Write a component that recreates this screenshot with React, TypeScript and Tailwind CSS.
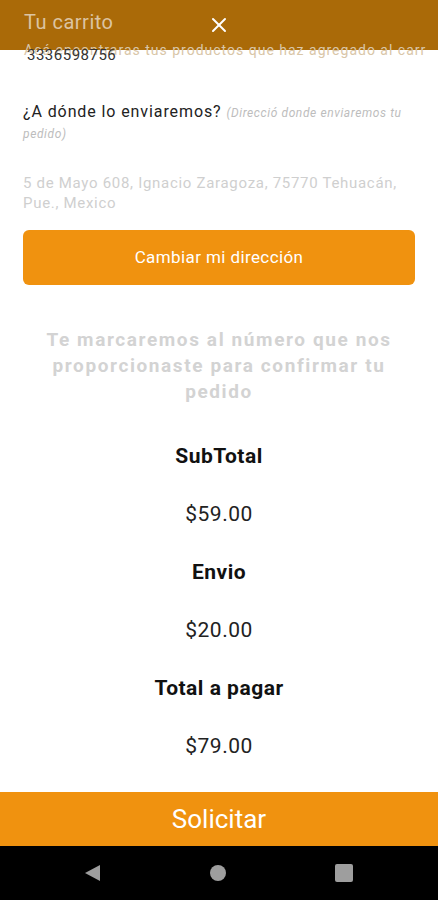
import { X } from 'lucide-react';

const font = { fontFamily: 'Roboto, "Noto Sans", sans-serif' };

const totals = [
  { label: 'SubTotal', value: '$59.00' },
  { label: 'Envio', value: '$20.00' },
  { label: 'Total a pagar', value: '$79.00' },
];

export default function App() {
  return (
    <div className="w-[438px] h-[900px] bg-white flex flex-col overflow-hidden" style={font}>
      {/* Cabecera: el subtítulo se sale de la barra y queda bajo el teléfono */}
      <div className="relative h-[50px] bg-[#aa6a08] shrink-0 z-0">
        <div className="flex items-start pl-6 pt-[9px]">
          <span className="text-[20px] leading-[26px] tracking-[0.5px] text-[#dcc4a2] w-[183px]">Tu carrito</span>
          <X className="mt-[4px] w-6 h-6 text-white" strokeWidth={2} />
        </div>
        <p className="relative z-10 pl-6 mt-[5px] text-[14px] leading-[16px] tracking-[1px] text-[#d9c6a8] whitespace-nowrap overflow-hidden">
          Acá encontraras tus productos que haz agregado al carr
        </p>
      </div>

      <div className="relative z-10 flex-1 min-h-0 flex flex-col">
        <p className="-mt-[3px] pl-[27px] text-[15px] leading-[16px] tracking-[0.5px] text-[#333]">3336598756</p>

        <div className="px-[23px] pt-[39px]">
          <p className="leading-[19px]">
            <span className="text-[16px] tracking-[0.9px] text-[#222]">¿A dónde lo enviaremos? </span>
            <span className="text-[12px] italic tracking-[0.6px] text-[#bdbdbd]">(Direcció donde enviaremos tu pedido)</span>
          </p>
          <p className="mt-[29px] text-[15px] leading-[20px] tracking-[0.7px] text-[#cfcfcf]">
            5 de Mayo 608, Ignacio Zaragoza, 75770 Tehuacán, Pue., Mexico
          </p>
          <button className="mt-[17px] w-full h-[55px] rounded-[6px] bg-[#f0920f] text-white text-[17px] tracking-[0.4px]">
            Cambiar mi dirección
          </button>
        </div>

        <p className="mt-[42px] px-[40px] text-center text-[19px] leading-[26px] tracking-[1.6px] font-bold text-[#d3d3d3]">
          Te marcaremos al número que nos proporcionaste para confirmar tu pedido
        </p>

        <div className="mt-[38px] flex flex-col items-center">
          {totals.map((t) => (
            <div key={t.label} className="flex flex-col items-center">
              <p className="h-[58px] text-[21px] leading-[26px] tracking-[0.5px] font-bold text-[#111]">{t.label}</p>
              <p className="h-[58px] text-[21px] leading-[26px] tracking-[0.5px] text-[#222]">{t.value}</p>
            </div>
          ))}
        </div>

        <div className="mt-auto h-[54px] shrink-0 bg-[#f0920f] flex items-center justify-center">
          <span className="text-[26px] text-white">Solicitar</span>
        </div>
      </div>

      {/* Barra de navegación */}
      <div className="h-[54px] bg-black flex items-center pl-[83px] gap-[109px] shrink-0">
        <svg width="18" height="18" viewBox="0 0 18 18">
          <path d="M17 1 L17 17 L2 9 Z" fill="#9e9e9e" />
        </svg>
        <span className="w-4 h-4 rounded-full bg-[#9e9e9e]" />
        <span className="w-[18px] h-[18px] rounded-[2px] bg-[#9e9e9e]" />
      </div>
    </div>
  );
}
